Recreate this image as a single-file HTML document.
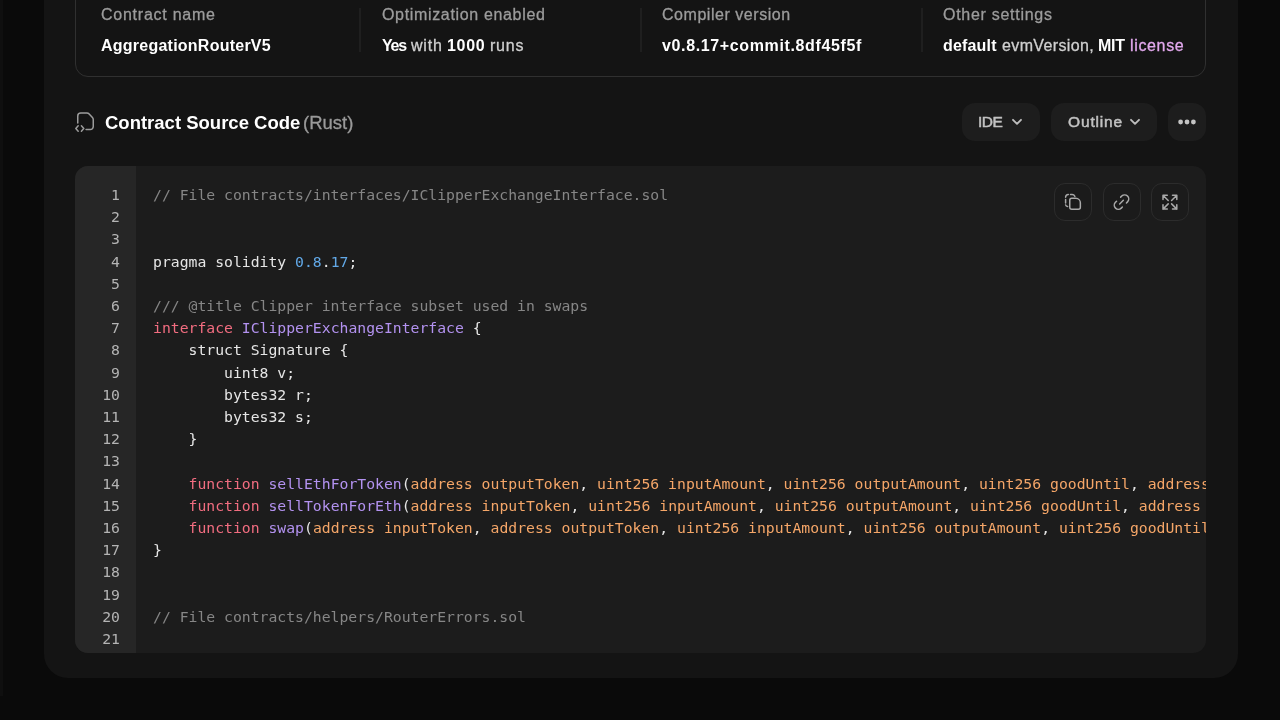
<!DOCTYPE html>
<html lang="en">
<head>
<meta charset="utf-8">
<title>Contract Source Code</title>
<style>
*{box-sizing:border-box;margin:0;padding:0}
html,body{width:1280px;height:720px;overflow:hidden;background:#0a0a0a}
body{position:relative;font-family:"Liberation Sans",sans-serif;color:#fff;-webkit-font-smoothing:antialiased}
.abs{position:absolute}
.lbl,.val,.h,.btn,pre{will-change:transform}
.stripe{left:0;top:0;width:3px;height:696px;background:#0f0f0f}
.panel{left:44px;top:-40px;width:1194px;height:718px;background:#141414;border-radius:24px}
.card{left:75px;top:-30px;width:1131px;height:107px;border:1px solid #303030;border-radius:0 0 13px 13px}
.div{top:8px;width:2px;height:44px;background:#1f1f1f}
.lbl{top:5px;font-size:16px;line-height:20px;color:#9c9c9c;white-space:nowrap;-webkit-text-stroke-width:.3px}
.r{-webkit-text-stroke-width:.3px}
.val{top:36px;font-size:16px;line-height:20px;color:#d0d0d0;white-space:nowrap}
.val b{color:#fff;font-weight:700}
.val.lic{color:#e3a9ee}
.h{left:105px;top:111px;font-size:18.5px;line-height:24px;font-weight:700;color:#fff;white-space:nowrap}
.h2{font-weight:400;color:#9a9a9a}
.btn{top:103px;height:38px;border-radius:13px;background:#1d1d1d;color:#b9b9b9;font-size:15.5px;line-height:38px;white-space:nowrap}
.bt{background:none;font-weight:400;font-size:15.5px;color:#c2c2c2;-webkit-text-stroke-width:.5px}
.code{left:75px;top:166px;width:1131px;height:487px;background:#1c1c1c;border-radius:13px;overflow:hidden}
.gutter{left:0;top:0;width:61px;height:487px;background:#262626}
pre{font-family:"DejaVu Sans Mono","Liberation Mono",monospace;font-size:14.76px;line-height:22.2px;white-space:pre}
.ln{left:.6px;top:18px;width:44px;text-align:right;color:#b4b4b4}
.src{left:78px;top:18px;color:#e6e6e6}
.c{color:#868686}.k{color:#f26d80}.t{color:#b392f0}.n{color:#62a9e8}.p{color:#f5a668}
.ib{top:183px;width:38px;height:38px;border:1px solid #2c2c2c;border-radius:11px;background:#1b1b1b}
</style>
</head>
<body>
<div class="abs stripe"></div>
<div class="abs panel"></div>
<div class="abs card"></div>
<div class="abs div" style="left:359px"></div>
<div class="abs div" style="left:640px"></div>
<div class="abs div" style="left:921px"></div>

<div class="abs lbl" style="left:101px;letter-spacing:.75px">Contract name</div>
<div class="abs val" style="left:100.6px;letter-spacing:.24px"><b>AggregationRouterV5</b></div>
<div class="abs lbl" style="left:381.6px;letter-spacing:.66px">Optimization enabled</div>
<div class="abs val" style="left:382px;letter-spacing:-1.2px"><b>Yes</b></div>
<div class="abs val r" style="left:411.2px;letter-spacing:.78px">with</div>
<div class="abs val" style="left:447.1px;letter-spacing:.67px"><b>1000</b></div>
<div class="abs val r" style="left:489.6px;letter-spacing:.76px">runs</div>
<div class="abs lbl" style="left:662.1px;letter-spacing:.54px">Compiler version</div>
<div class="abs val" style="left:662.1px;letter-spacing:.63px"><b>v0.8.17+commit.8df45f5f</b></div>
<div class="abs lbl" style="left:942.7px;letter-spacing:.72px">Other settings</div>
<div class="abs val" style="left:942.7px;letter-spacing:.18px"><b>default</b></div>
<div class="abs val r" style="left:1001.7px;letter-spacing:.37px">evmVersion,</div>
<div class="abs val" style="left:1097.6px;letter-spacing:-.24px"><b>MIT</b></div>
<div class="abs val lic r" style="left:1130.2px;letter-spacing:.65px">license</div>

<div class="abs h">Contract Source Code</div>
<div class="abs h h2 r" style="left:302.8px">(Rust)</div>
<svg class="abs" style="left:72px;top:108px" width="28" height="28" viewBox="0 0 28 28" fill="none" stroke="#9c9c9c" stroke-width="1.5" stroke-linecap="round" stroke-linejoin="round">
<path d="M5.75 15V8a3 3 0 0 1 3-3h6.2a3 3 0 0 1 2.2 1l3.3 3.6a3 3 0 0 1 .8 2v7a3 3 0 0 1-3 3h-4.2"/>
<path d="M6.2 17.8 3.8 20.5l2.4 2.7M9.4 17.8l2.4 2.7-2.4 2.7"/>
</svg>

<div class="abs btn" style="left:962px;width:78px"></div>
<div class="abs btn bt" style="left:978.4px;letter-spacing:-.55px">IDE</div>
<svg class="abs" style="left:1010px;top:115px" width="14" height="14" viewBox="0 0 14 14" fill="none" stroke="#bdbdbd" stroke-width="1.9" stroke-linecap="round" stroke-linejoin="round"><path d="M3 4.8 7 8.8 11 4.8"/></svg>
<div class="abs btn" style="left:1051px;width:106px"></div>
<div class="abs btn bt" style="left:1067.7px;letter-spacing:.85px">Outline</div>
<svg class="abs" style="left:1127.5px;top:115px" width="14" height="14" viewBox="0 0 14 14" fill="none" stroke="#bdbdbd" stroke-width="1.9" stroke-linecap="round" stroke-linejoin="round"><path d="M3 4.8 7 8.8 11 4.8"/></svg>
<div class="abs btn" style="left:1168px;width:38px"></div>
<svg class="abs" style="left:1175px;top:115px" width="24" height="14" viewBox="0 0 24 14" fill="#c4c4c4"><circle cx="5.6" cy="7" r="2.4"/><circle cx="12" cy="7" r="2.4"/><circle cx="18.4" cy="7" r="2.4"/></svg>

<div class="abs code">
<div class="abs gutter"></div>
<pre class="abs ln">1
2
3
4
5
6
7
8
9
10
11
12
13
14
15
16
17
18
19
20
21</pre>
<pre class="abs src"><span class="c">// File contracts/interfaces/IClipperExchangeInterface.sol</span>


pragma solidity <span class="n">0.8</span>.<span class="n">17</span>;

<span class="c">/// @title Clipper interface subset used in swaps</span>
<span class="k">interface</span> <span class="t">IClipperExchangeInterface</span> {
    struct Signature {
        uint8 v;
        bytes32 r;
        bytes32 s;
    }

    <span class="k">function</span> <span class="t">sellEthForToken</span>(<span class="p">address outputToken</span>, <span class="p">uint256 inputAmount</span>, <span class="p">uint256 outputAmount</span>, <span class="p">uint256 goodUntil</span>, <span class="p">address destinationAddress</span>, <span class="p">Signature calldata theSignature</span>, <span class="p">bytes calldata auxiliaryData</span>) external payable;
    <span class="k">function</span> <span class="t">sellTokenForEth</span>(<span class="p">address inputToken</span>, <span class="p">uint256 inputAmount</span>, <span class="p">uint256 outputAmount</span>, <span class="p">uint256 goodUntil</span>, <span class="p">address destinationAddress</span>, <span class="p">Signature calldata theSignature</span>, <span class="p">bytes calldata auxiliaryData</span>) external;
    <span class="k">function</span> <span class="t">swap</span>(<span class="p">address inputToken</span>, <span class="p">address outputToken</span>, <span class="p">uint256 inputAmount</span>, <span class="p">uint256 outputAmount</span>, <span class="p">uint256 goodUntil</span>, <span class="p">address destinationAddress</span>, <span class="p">Signature calldata theSignature</span>, <span class="p">bytes calldata auxiliaryData</span>) external;
}


<span class="c">// File contracts/helpers/RouterErrors.sol</span>
</pre>
</div>

<div class="abs ib" style="left:1054px"></div>
<div class="abs ib" style="left:1103px"></div>
<div class="abs ib" style="left:1151px"></div>
<svg class="abs" style="left:1050px;top:180px" width="145" height="45" viewBox="1050 180 145 45" fill="none" stroke="#a9a9a9" stroke-width="1.5" stroke-linecap="round" stroke-linejoin="round">
<path d="M1071.75 198.35h4.1a4.5 4.5 0 0 1 4.5 4.5v4.5a2 2 0 0 1-2 2h-6.6a2 2 0 0 1-2-2v-7a2 2 0 0 1 2-2z"/>
<path d="M1065.6 197.3a2.8 2.8 0 0 1 2.7-2.7M1070.5 194.6h1.6a3.4 3.4 0 0 1 2.8 1.7M1065.6 199.5v3.5M1065.6 204.9a2.2 2.2 0 0 0 2 1.6"/>
<g transform="translate(1121.5 202.1) rotate(-45)">
<path d="M2.9-4.1H4.4a4.1 4.1 0 0 1 0 8.2H2.9M-2.9-4.1H-4.4a4.1 4.1 0 0 0 0 8.2H-2.9M-2.6 0H2.6"/>
</g>
<g transform="translate(1169.9 202.2)">
<path d="M-2.6 -6.9H-6.9V-2.6M-6.9 -6.9L-1.7 -1.7M-2.6 6.9H-6.9V2.6M-6.9 6.9L-1.7 1.7M2.6 -6.9H6.9V-2.6M6.9 -6.9L1.7 -1.7M2.6 6.9H6.9V2.6M6.9 6.9L1.7 1.7"/>
</g>
</svg>
</body>
</html>
